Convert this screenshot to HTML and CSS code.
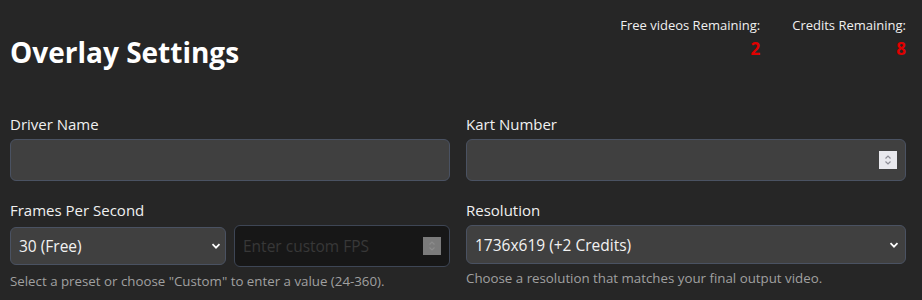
FILE: index.html
```html
<!DOCTYPE html>
<html lang="en">
<head>
<meta charset="utf-8">
<title>Overlay Settings</title>
<link rel="stylesheet" href="styles.css">
</head>
<body>
<div class="page">
  <header class="header">
    <h1 class="title">Overlay Settings</h1>
    <div class="stats">
      <div class="stat">
        <div class="stat-label">Free videos Remaining:</div>
        <div class="stat-value">2</div>
      </div>
      <div class="stat">
        <div class="stat-label">Credits Remaining:</div>
        <div class="stat-value">8</div>
      </div>
    </div>
  </header>

  <div class="grid">
    <div class="field">
      <label class="label" for="driver">Driver Name</label>
      <div class="box box-tall">
        <input id="driver" class="control" type="text">
      </div>
    </div>
    <div class="field">
      <label class="label" for="kart">Kart Number</label>
      <div class="box box-tall">
        <input id="kart" class="control" type="text" inputmode="numeric">
        <span class="spin spin-light">
          <svg viewBox="0 0 18 18" width="18" height="18"><path d="M6.5 7.5 L9 5 L11.5 7.5 M6.5 10.5 L9 13 L11.5 10.5" fill="none" stroke="#8d8d96" stroke-width="1.2"/></svg>
        </span>
      </div>
    </div>

    <div class="field">
      <label class="label" for="fps">Frames Per Second</label>
      <div class="fps-row">
        <div class="box box-select">
          <select id="fps" class="control select">
            <option>30 (Free)</option>
            <option>60</option>
            <option>Custom</option>
          </select>
          <svg class="chev" viewBox="0 0 10 10" width="10" height="10"><path d="M1.5 3.2 L5 6.7 L8.5 3.2" fill="none" stroke="#ffffff" stroke-width="1.7"/></svg>
        </div>
        <div class="box box-dark">
          <input class="control" type="text" placeholder="Enter custom FPS" disabled>
          <span class="spin spin-dim">
            <svg viewBox="0 0 18 18" width="18" height="18"><path d="M6.5 7.5 L9 5 L11.5 7.5 M6.5 10.5 L9 13 L11.5 10.5" fill="none" stroke="#8c8c8c" stroke-width="1.2"/></svg>
          </span>
        </div>
      </div>
      <p class="help">Select a preset or choose "Custom" to enter a value (24-360).</p>
    </div>
    <div class="field">
      <label class="label" for="res">Resolution</label>
      <div class="box box-select box-res">
        <select id="res" class="control select">
          <option>1736x619 (+2 Credits)</option>
        </select>
        <svg class="chev" viewBox="0 0 10 10" width="10" height="10"><path d="M1.5 3.2 L5 6.7 L8.5 3.2" fill="none" stroke="#ffffff" stroke-width="1.7"/></svg>
      </div>
      <p class="help">Choose a resolution that matches your final output video.</p>
    </div>
  </div>
</div>
</body>
</html>
```

FILE: styles.css
```css
* { box-sizing: border-box; }
html, body {
  margin: 0;
  padding: 0;
  background: #262626;
  color: #f2f2f2;
  font-family: "Open Sans", "Noto Sans", sans-serif;
}
.page {
  padding: 12px 16px 0 10px;
}
.header {
  display: flex;
  justify-content: space-between;
  align-items: flex-start;
  height: 101px;
}
.title {
  margin: 20px 0 0 0;
  font-size: 28px;
  font-weight: 700;
  line-height: 40px;
  color: #ffffff;
}
.stats {
  display: flex;
  gap: 31px;
  margin-top: 4px;
  margin-right: 0;
}
.stat {
  display: flex;
  flex-direction: column;
  align-items: flex-end;
}
.stat:first-child { margin-right: 1px; }
.stat-label {
  font-size: 13px;
  line-height: 18px;
  color: #f0f0f0;
}
.stat-value {
  margin-top: 3px;
  font-size: 17px;
  font-weight: 700;
  line-height: 24px;
  color: #e00000;
}
.grid {
  display: grid;
  grid-template-columns: 440px 440px;
  column-gap: 16px;
  row-gap: 18px;
}
.field {
  display: flex;
  flex-direction: column;
}
.label {
  font-size: 15px;
  line-height: 22px;
  margin-bottom: 4px;
  color: #f0f0f0;
}
.box {
  display: flex;
  align-items: center;
  background: #404040;
  border: 1px solid #4a5262;
  border-radius: 6px;
  padding: 0 8px 0 8px;
}
.box-tall { height: 42px; }
.box-select { height: 38px; padding-right: 4px; }
.box-res { height: 39px; padding-right: 6px; }
.box-dark {
  height: 42px;
  background: #171717;
  border-color: #3e4655;
  padding-right: 8px;
}
.control {
  flex: 1;
  min-width: 0;
  height: 100%;
  border: 0;
  outline: 0;
  background: transparent;
  color: #f2f2f2;
  font-family: inherit;
  font-size: 15.5px;
  padding: 0;
}
.control::placeholder { color: #383838; }
.select {
  appearance: none;
  -webkit-appearance: none;
  cursor: pointer;
}
.chev { flex: none; }
.fps-row {
  display: grid;
  grid-template-columns: minmax(0, 1fr) minmax(0, 1fr);
  gap: 8px;
  align-items: center;
}
.spin {
  flex: none;
  display: flex;
  align-items: center;
  justify-content: center;
  width: 18px;
  height: 18px;
}
.spin-light { background: #e9e9ee; }
.spin-dim { background: #7b7b7b; }
.help {
  margin: 4px 0 0 0;
  font-size: 13.3px;
  line-height: 20px;
  color: #a0a0a0;
}
```
